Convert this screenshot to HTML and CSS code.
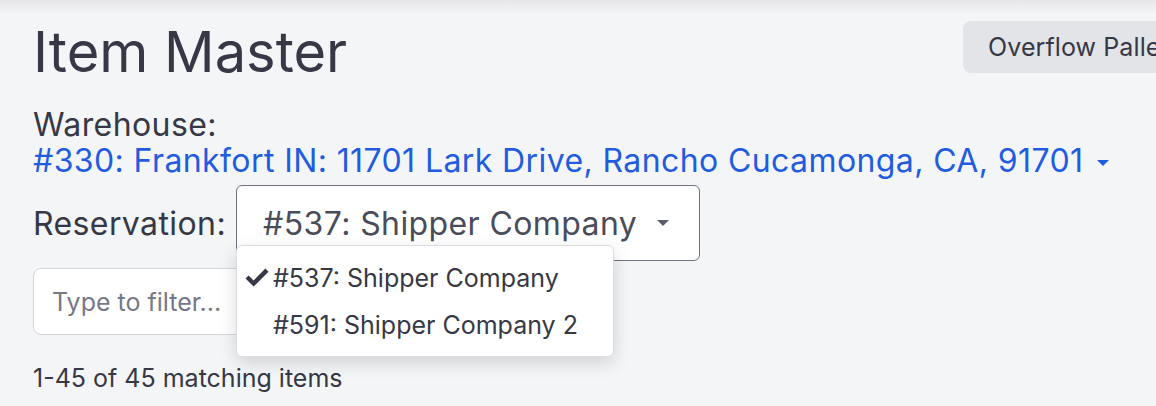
FILE: index.html
```html
<!DOCTYPE html>
<html>
<head>
    <title>Item Master</title>
    <link rel="stylesheet" href="styles.css">
</head>
<body>

<div class="top-shade"></div>

<div class="page">
    <div class="title-row">
        <h1 class="page-title">Item Master</h1>
        <button type="button" class="overflow-btn">Overflow Pallets</button>
    </div>

    <div class="warehouse">
        <div class="warehouse-label">Warehouse:</div>
        <a href="#" class="warehouse-link">#330: Frankfort IN: 11701 Lark Drive, Rancho Cucamonga, CA, 91701<span class="caret"></span></a>
    </div>

    <div class="reservation-row">
        <label class="reservation-label">Reservation:</label>
        <div class="select-wrap">
            <div class="select-box">
                <span>#537: Shipper Company</span>
                <span class="caret caret-gray"></span>
            </div>
            <ul class="select-menu">
                <li class="menu-item">
                    <span class="check">
                        <svg width="24" height="19" viewBox="0 0 24 19"><path d="M0.5 10.5 L3.6 7.4 L8.6 12.4 L20.4 0.6 L23.5 3.7 L8.6 18.6 Z" fill="#363845"/></svg>
                    </span>#537: Shipper Company
                </li>
                <li class="menu-item"><span class="check"></span>#591: Shipper Company 2</li>
            </ul>
        </div>
    </div>

    <input type="text" class="filter-input" placeholder="Type to filter...">

    <div class="match-count">1-45 of 45 matching items</div>
</div>

</body>
</html>
```

FILE: styles.css
```css
body {
    margin: 0; font-family: 'Inter', 'Noto Sans', sans-serif; background-color: #f4f5f7; color: #363845; overflow: hidden;
}

.top-shade { height: 14px; background: linear-gradient(#e6e6e8, #f4f5f7);
}

.page { padding-left: 33px;
}

.title-row { display: grid; grid-template-columns: 930px auto; align-items: start;
}

.page-title { margin: 5px 0 0 0; font-size: 56px; font-weight: 400; line-height: 67px; color: #363845;
}

.overflow-btn { margin-top: 7px; height: 52px; padding: 0 25px; background-color: #e3e4e8; border: none; border-radius: 8px; font-family: inherit; font-size: 25px; letter-spacing: 0.1px; color: #363845; white-space: nowrap;
}

.warehouse { margin-top: 21px; font-size: 32px; letter-spacing: 0.4px; line-height: 36px;
}

.warehouse-link { color: #1f5ce0; text-decoration: none;
}

.caret { display: inline-block; width: 0; height: 0; margin-left: 13px; vertical-align: middle; border-left: 6px solid transparent; border-right: 6px solid transparent; border-top: 6px solid #1f5ce0;
}

.caret-gray { border-top-color: #5a5d6b; margin-left: 20px;
}

.reservation-row { display: flex; align-items: center; margin-top: 6px; font-size: 32px; letter-spacing: 0.4px;
}

.reservation-label { margin-right: 10px;
}

.select-wrap { position: relative;
}

.select-box { display: flex; align-items: center; height: 74px; padding: 0 30px 0 26px; background-color: #fff; border: 1px solid #70737f; border-radius: 6px; color: #494c59;
}

.select-menu { position: absolute; left: 0; top: 60px; width: 378px; box-sizing: border-box; margin: 0; padding: 8px 0; list-style: none; background-color: #fff; border: 1px solid #dcdde2; border-radius: 6px; box-shadow: 0 6px 18px rgba(0, 0, 0, 0.14); font-size: 25px; letter-spacing: 0; color: #363845; z-index: 10;
}

.menu-item { display: flex; align-items: center; height: 47px; padding-left: 8px;
}

.check { display: inline-flex; align-items: center; width: 28px;
}

.filter-input { display: block; margin-top: 7px; width: 300px; height: 67px; box-sizing: border-box; padding: 0 18px; border: 1px solid #d3d5db; border-radius: 8px; font-family: inherit; font-size: 25px; color: #363845; background-color: #fff;
}

.filter-input::placeholder { color: #767885;
}

.match-count { margin-top: 28px; font-size: 25px; line-height: 30px;
}
```
